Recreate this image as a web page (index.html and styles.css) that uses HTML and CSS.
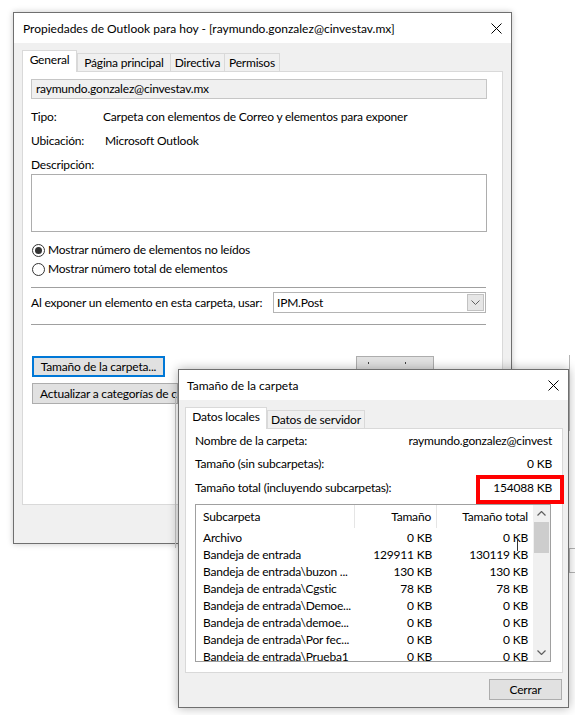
FILE: index.html
```html
<!DOCTYPE html>
<html lang="es">
<head>
<meta charset="utf-8">
<title>Propiedades de Outlook</title>
<link rel="stylesheet" href="styles.css">
</head>
<body>
<div class="backdrop-line bl-v1"></div>
<div class="backdrop-line bl-v2"></div>
<div class="backdrop-line bl-h1"></div>
<div class="backdrop-line bl-h2"></div>

<div class="win win-props">
  <div class="titlebar">
    <span class="title">Propiedades de Outlook para hoy - [raymundo.gonzalez@cinvestav.mx]</span>
    <svg class="close" width="11" height="11" viewBox="0 0 11 11"><path d="M0.5 0.5L10.5 10.5M10.5 0.5L0.5 10.5" stroke="#000" stroke-width="1"/></svg>
  </div>
  <div class="winbody">
    <div class="tabs">
      <div class="tab active tab-general">General</div>
      <div class="tab tab-pagina">Página principal</div>
      <div class="tab tab-directiva">Directiva</div>
      <div class="tab tab-permisos">Permisos</div>
    </div>
    <div class="panel panel-props">
      <div class="field">raymundo.gonzalez@cinvestav.mx</div>
      <div class="row row-first"><span class="lbl lbl-tipo">Tipo:</span><span>Carpeta con elementos de Correo y elementos para exponer</span></div>
      <div class="row"><span class="lbl lbl-ubic">Ubicación:</span><span>Microsoft Outlook</span></div>
      <div class="row"><span>Descripción:</span></div>
      <div class="desc-box"></div>
      <div class="radio-row radio-first"><span class="radio checked"></span><span>Mostrar número de elementos no leídos</span></div>
      <div class="radio-row"><span class="radio"></span><span>Mostrar número total de elementos</span></div>
      <div class="sep sep-1"></div>
      <div class="combo-row">
        <span>Al exponer un elemento en esta carpeta, usar:</span>
        <div class="combo"><span>IPM.Post</span><span class="dd"><svg width="9" height="5" viewBox="0 0 9 5"><path d="M0.5 0.5L4.5 4.5L8.5 0.5" fill="none" stroke="#606060" stroke-width="1"/></svg></span></div>
      </div>
      <div class="sep sep-2"></div>
      <div class="btn-row">
        <div class="btn btn-focus btn-size">Tamaño de la carpeta...</div>
        <div class="btn btn-hidden"><span class="dot"></span><span class="dot dot-2"></span></div>
      </div>
      <div class="btn btn-cat"><span class="btn-cat-text">Actualizar a categorías de c</span></div>
    </div>
  </div>
</div>

<div class="edge-strip"></div>

<div class="win win-size">
  <div class="titlebar">
    <span class="title">Tamaño de la carpeta</span>
    <svg class="close" width="11" height="11" viewBox="0 0 11 11"><path d="M0.5 0.5L10.5 10.5M10.5 0.5L0.5 10.5" stroke="#000" stroke-width="1"/></svg>
  </div>
  <div class="winbody winbody-size">
    <div class="tabs">
      <div class="tab active tab-locales">Datos locales</div>
      <div class="tab tab-servidor">Datos de servidor</div>
    </div>
    <div class="panel panel-size">
      <div class="irow irow-1"><span>Nombre de la carpeta:</span><span>raymundo.gonzalez@cinvest</span></div>
      <div class="irow irow-2"><span>Tamaño (sin subcarpetas):</span><span>0 KB</span></div>
      <div class="irow irow-3"><span>Tamaño total (incluyendo subcarpetas):</span><span>154088 KB</span></div>
      <div class="listview">
        <div class="lv-body">
          <div class="lv-head">
            <div class="c1 hd">Subcarpeta</div>
            <div class="c2 hd">Tamaño</div>
            <div class="c3">Tamaño total</div>
          </div>
          <div class="lv-row"><div class="c1">Archivo</div><div class="c2">0 KB</div><div class="c3">0 KB</div></div>
          <div class="lv-row"><div class="c1">Bandeja de entrada</div><div class="c2">129911 KB</div><div class="c3">130119 KB</div></div>
          <div class="lv-row"><div class="c1">Bandeja de entrada\buzon ...</div><div class="c2">130 KB</div><div class="c3">130 KB</div></div>
          <div class="lv-row"><div class="c1">Bandeja de entrada\Cgstic</div><div class="c2">78 KB</div><div class="c3">78 KB</div></div>
          <div class="lv-row"><div class="c1">Bandeja de entrada\Demoe...</div><div class="c2">0 KB</div><div class="c3">0 KB</div></div>
          <div class="lv-row"><div class="c1">Bandeja de entrada\demoe...</div><div class="c2">0 KB</div><div class="c3">0 KB</div></div>
          <div class="lv-row"><div class="c1">Bandeja de entrada\Por fec...</div><div class="c2">0 KB</div><div class="c3">0 KB</div></div>
          <div class="lv-row"><div class="c1">Bandeja de entrada\Prueba1</div><div class="c2">0 KB</div><div class="c3">0 KB</div></div>
        </div>
        <div class="sb">
          <div class="sb-btn"><svg width="9" height="5" viewBox="0 0 9 5"><path d="M0.5 4.5L4.5 0.5L8.5 4.5" fill="none" stroke="#606060" stroke-width="1.2"/></svg></div>
          <div class="sb-thumb"></div>
          <div class="sb-track"></div>
          <div class="sb-btn"><svg width="9" height="5" viewBox="0 0 9 5"><path d="M0.5 0.5L4.5 4.5L8.5 0.5" fill="none" stroke="#606060" stroke-width="1.2"/></svg></div>
        </div>
      </div>
    </div>
    <div class="actions">
      <div class="btn btn-close">Cerrar</div>
    </div>
  </div>
</div>

<div class="highlight"></div>
<div class="ibeam"></div>
</body>
</html>
```

FILE: styles.css
```css
* { box-sizing: border-box; }
html, body { margin: 0; padding: 0; }
body {
  width: 575px;
  height: 715px;
  background: #fff;
  position: relative;
  overflow: hidden;
  font-family: Lato, "Noto Sans", sans-serif;
  font-size: 12px;
  letter-spacing: -0.2px;
  color: #000;
  line-height: 16px;
}

/* faint lines of windows lying behind */
.backdrop-line { position: absolute; background: #b4b4b4; }
.bl-v1 { left: 569px; top: 355px; width: 1px; height: 76px; }
.bl-v2 { left: 569px; top: 548px; width: 6px; height: 1px; }
.bl-h1 { left: 569px; top: 572px; width: 6px; height: 1px; }
.bl-h2 { left: 569px; top: 548px; width: 1px; height: 25px; }
.edge-strip { position: absolute; left: 175px; top: 393px; width: 1px; height: 155px; background: #c4c4c4; }

.win {
  position: absolute;
  display: flex;
  flex-direction: column;
  background: #f0f0f0;
  border: 1px solid #6f6f6f;
}
.win-props {
  left: 13px;
  top: 12px;
  width: 499px;
  height: 532px;
  box-shadow: 0 0 6px rgba(0, 0, 0, 0.22);
}
.win-size {
  left: 178px;
  top: 369px;
  width: 391px;
  height: 339px;
  box-shadow: 0 0 10px rgba(0, 0, 0, 0.3);
}

.titlebar {
  flex: none;
  height: 30px;
  background: #fff;
  display: flex;
  align-items: center;
  padding-left: 9px;
  padding-right: 9px;
}
.win-size .titlebar { padding-left: 8px; }
.title { padding-top: 2px; white-space: nowrap; letter-spacing: 0; }
.close { margin-left: auto; flex: none; }

.winbody {
  flex: 1;
  display: flex;
  flex-direction: column;
  padding: 7px 8px 0 8px;
}
.winbody-size { padding: 7px 5px 0 6px; }

.tabs {
  display: flex;
  align-items: flex-end;
  height: 22px;
  margin-bottom: -1px;
  position: relative;
  z-index: 1;
}
.tab {
  height: 18px;
  margin-bottom: 1px;
  margin-left: -1px;
  padding: 0;
  border: 1px solid #d9d9d9;
  border-bottom: none;
  background: #f0f0f0;
  display: flex;
  align-items: center;
  justify-content: center;
  white-space: nowrap;
  flex: none;
}
.tab.active {
  height: 22px;
  margin-bottom: 0;
  margin-left: 0;
  padding-bottom: 3px;
  background: #fff;
  position: relative;
  z-index: 2;
}
.tab.active + .tab { margin-left: 0; }
.tab-general { width: 55px; }
.tab-pagina { width: 94px; }
.tab-directiva { width: 55px; }
.tab-permisos { width: 56px; }
.tab-locales { width: 82px; }
.tab-servidor { width: 98px; }

.panel {
  background: #fff;
  border: 1px solid #d9d9d9;
  display: flex;
  flex-direction: column;
}
.panel-props {
  height: 434px;
  padding: 7px 8px 0 8px;
}

.field {
  width: 456px;
  height: 20px;
  background: #f0f0f0;
  border: 1px solid #c6c6c6;
  padding-left: 4px;
  display: flex;
  align-items: center;
}
.row {
  height: 16px;
  display: flex;
  align-items: center;
  margin-top: 8px;
  white-space: nowrap;
}
.row-first { margin-top: 10px; }
.lbl { flex: none; }
.lbl-tipo { width: 72px; }
.lbl-ubic { width: 74px; }

.desc-box {
  width: 456px;
  height: 58px;
  margin-top: 1px;
  border: 1px solid #adadad;
  background: #fff;
}

.radio-row {
  height: 16px;
  display: flex;
  align-items: center;
  margin-top: 3px;
}
.radio-first { margin-top: 10px; }
.radio {
  width: 13px;
  height: 13px;
  margin-left: 1px;
  margin-right: 3px;
  border: 1px solid #333;
  border-radius: 50%;
  display: flex;
  align-items: center;
  justify-content: center;
  flex: none;
}
.radio.checked::after {
  content: "";
  width: 7px;
  height: 7px;
  border-radius: 50%;
  background: #333;
}

.sep {
  width: 455px;
  height: 1px;
  background: #a0a0a0;
}
.sep-1 { margin-top: 10px; }
.sep-2 { margin-top: 11px; }

.combo-row {
  width: 455px;
  height: 21px;
  margin-top: 4px;
  display: flex;
  align-items: center;
  justify-content: space-between;
}
.combo {
  width: 213px;
  height: 21px;
  border: 1px solid #b4b4b4;
  padding-left: 3px;
  display: flex;
  align-items: center;
}
.dd {
  margin-left: auto;
  margin-right: 1px;
  width: 17px;
  height: 17px;
  background: #e6e6e6;
  border: 1px solid #c2c2c2;
  display: flex;
  align-items: center;
  justify-content: center;
}

.btn {
  height: 21px;
  background: #e1e1e1;
  border: 1px solid #adadad;
  display: flex;
  align-items: center;
  justify-content: center;
  padding: 0 7px;
  white-space: nowrap;
}
.btn-row {
  display: flex;
  margin-top: 31px;
}
.btn-size { width: 133px; margin-left: 1px; }
.btn-focus { border: 2px solid #0078d7; }
.btn-hidden {
  width: 78px;
  margin-left: 191px;
  position: relative;
}
.dot {
  position: absolute;
  left: 11px;
  top: 5px;
  width: 1px;
  height: 2px;
  background: #444;
}
.dot-2 { left: 48px; }
.btn-cat {
  margin-top: 6px;
  margin-left: 1px;
  width: 146px;
  padding-right: 0;
  justify-content: flex-start;
  overflow: hidden;
}
.btn-cat-text { white-space: nowrap; }

/* second dialog */
.panel-size {
  height: 245px;
  padding: 4px 10px 0 9px;
}
.irow {
  height: 16px;
  display: flex;
  justify-content: space-between;
  align-items: center;
  white-space: nowrap;
}
.irow-2 { margin-top: 7px; }
.irow-3 { margin-top: 8px; }

.listview {
  margin-top: 8px;
  width: 356px;
  height: 158px;
  border: 1px solid #a0a0a0;
  display: flex;
  overflow: hidden;
}
.lv-body {
  flex: 1;
  overflow: hidden;
}
.lv-head {
  display: flex;
  height: 24px;
  align-items: stretch;
}
.lv-head > div { display: flex; align-items: center; }
.lv-head .c2, .lv-head .c3 { justify-content: flex-end; }
.hd { border-right: 1px solid #e5e5e5; margin-bottom: 1px; }
.lv-row {
  display: flex;
  height: 17px;
  align-items: center;
  white-space: nowrap;
}
.c1 { width: 159px; padding-left: 7px; flex: none; overflow: hidden; }
.c2 { width: 82px; padding-right: 5px; text-align: right; flex: none; }
.c3 { width: 96px; padding-right: 5px; text-align: right; flex: none; }

.sb {
  width: 17px;
  flex: none;
  background: #f0f0f0;
  display: flex;
  flex-direction: column;
  align-items: center;
}
.sb-btn {
  width: 17px;
  height: 17px;
  display: flex;
  align-items: center;
  justify-content: center;
  flex: none;
}
.sb-thumb {
  width: 15px;
  height: 31px;
  background: #cdcdcd;
  flex: none;
}
.sb-track { flex: 1; }

.actions {
  display: flex;
  justify-content: flex-end;
  margin-top: 6px;
  padding-right: 1px;
}
.btn-close { width: 73px; }

/* annotations over content */
.highlight {
  position: absolute;
  left: 476px;
  top: 475px;
  width: 88px;
  height: 29px;
  border: 4px solid #f00;
}
.ibeam {
  position: absolute;
  left: 517px;
  top: 538px;
  width: 1px;
  height: 13px;
  background: #333;
}
```
